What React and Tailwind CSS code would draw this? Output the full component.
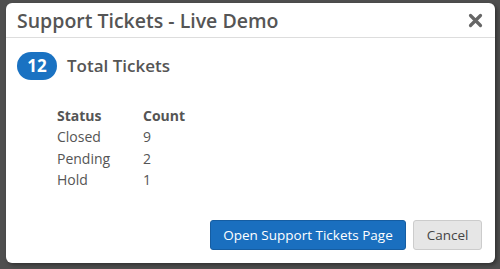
export default function App() {
  const rows = [
    { status: "Closed", count: 9 },
    { status: "Pending", count: 2 },
    { status: "Hold", count: 1 },
  ];
  return (
    <div
      className="w-[500px] h-[269px] bg-[#4f4f4f] pt-[3px] pl-[6px] overflow-hidden"
      style={{ fontFamily: "'Open Sans', sans-serif" }}
    >
      <div className="w-[489px] h-[260px] bg-white rounded-[6px] shadow-[2px_2px_4px_rgba(0,0,0,0.4)] flex flex-col">
        <div className="h-[35px] border-b border-[#dddddd] flex items-center justify-between pl-[11px] pr-[12px]">
          <h1 className="text-[19.5px] font-semibold text-[#555555] leading-none pt-[1px]">Support Tickets - Live Demo</h1>
          <svg width="15" height="15" viewBox="0 0 15 15">
            <path d="M2.5 2.5 L12.5 12.5 M12.5 2.5 L2.5 12.5" stroke="#666666" strokeWidth="3.2" strokeLinecap="round" />
          </svg>
        </div>
        <div className="flex-1 px-[11px] pt-[14px]">
          <div className="flex items-center gap-[10px]">
            <span className="w-[40px] h-[28px] rounded-full bg-[#1a72c2] text-white text-[17px] font-bold flex items-center justify-center">12</span>
            <span className="text-[17px] font-semibold text-[#555555]">Total Tickets</span>
          </div>
          <table className="ml-[40px] mt-[24px] text-[14px] text-[#555555]">
            <thead>
              <tr className="h-[22px]">
                <th className="text-left font-bold w-[86px] pb-0">Status</th>
                <th className="text-left font-bold">Count</th>
              </tr>
            </thead>
            <tbody>
              {rows.map((r) => (
                <tr key={r.status} className="h-[21.5px]">
                  <td>{r.status}</td>
                  <td>{r.count}</td>
                </tr>
              ))}
            </tbody>
          </table>
        </div>
        <div className="flex justify-end gap-[7px] pr-[13px] pb-[13px]">
          <button className="h-[30px] w-[196px] rounded-[3px] bg-[#1a6fbf] border border-[#155da2] text-white text-[13.5px]">
            Open Support Tickets Page
          </button>
          <button className="h-[30px] w-[69px] rounded-[3px] bg-[#e6e6e6] border border-[#cccccc] text-[#444444] text-[13.5px]">
            Cancel
          </button>
        </div>
      </div>
    </div>
  );
}
